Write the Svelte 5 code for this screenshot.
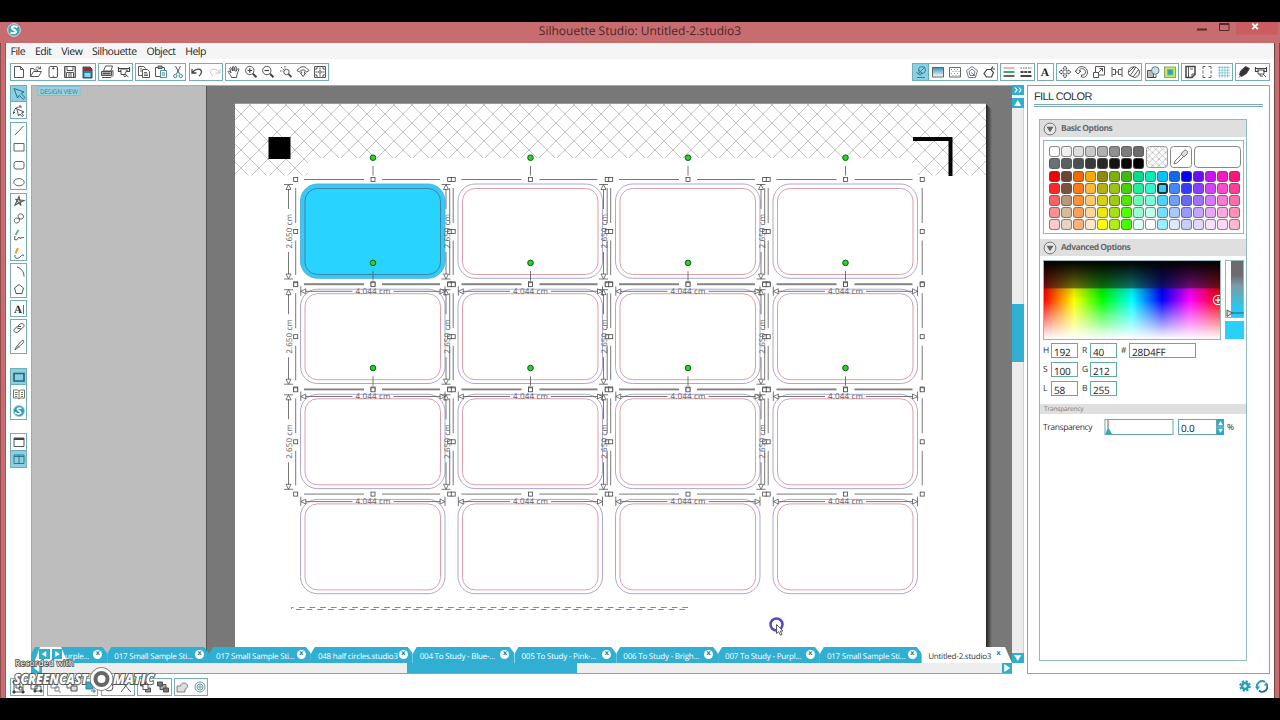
<script lang="ts">
  type Tool = string;
  type Group = { tools: Tool[]; gap?: number };

  // Inner markup of each 16x16 glyph
  const icons: Record<string, string> = {
    page: `<path d="M3.5 2.5h6l3 3v8h-9z M9.5 2.5v3h3" fill="#fff"/>`,
    open: `<path d="M2.5 12.5v-8h3l1 1.500h3v2 M2.500 12.500l3-5h8l-3 5z M8 4.500c1-2 3-2 4 0 M12.500 2.500v2.300h-2.300"/>`,
    card: `<rect x="4" y="2.500" width="8.500" height="11" rx="1.500"/><path d="M8.300 3v2.500 M7 4.500h2.600 M8.300 11.500v1.500" stroke-width=".8"/>`,
    save: `<path d="M2.500 2.500h11v11h-11z M5 2.500v4h6v-4 M4.500 13.500v-5h7v5 M6 10h4 M6 12h4"/><path d="M3.300 3v10 M12.800 3v10" stroke="#888"/>`,
    sd: `<path d="M4 3h7l2 2v9H4z" fill="#1888b0" stroke="#233a4c"/><path d="M5 4h7v3H5z" fill="#8c3044" stroke="none"/><path d="M5.500 9h6v4h-6z" fill="#8cd8ea" stroke="none"/>`,
    printer: `<path d="M4.500 7l2-5h7L12 7z" fill="#fff"/><path d="M2.500 7.500h10v4h-10z" fill="#aaa"/><path d="M3 13.500h9l2-2v-5l-1.500 1 M4 9.500h7"/>`,
    cutter: `<path d="M2.500 3v4.500h2.500V6h6v1.500h2.500V3 M2.500 4.500h11" stroke-width="1.200"/><path d="M5 6v4.500h3.500L11 6 M9.500 10.500l3 2.500" fill="#fff"/><circle cx="9" cy="11.500" r="1.200"/>`,
    copy: `<path d="M2.500 2.500h5l2 2v7h-7z"/><path d="M6.500 5.500h5l2 2v6h-7z" fill="#fff"/><path d="M8 8.500h3 M8 10h4 M8 11.500h4 M4 5h2 M4 7h2" stroke-width=".8"/>`,
    paste: `<path d="M2.500 3.500h9v9h-9z" /><path d="M5 2h4v2.500H5z" fill="#aaa"/><path d="M7.500 6.500h6v7h-6z" fill="#fff" stroke="#2c8798"/><path d="M9 9h3 M9 11h3" stroke-width=".8"/>`,
    cut: `<path d="M5.500 2l4 8 M10.500 2l-4 8"/><circle cx="5.300" cy="12" r="1.700" stroke="#287fa0"/><circle cx="10.700" cy="12" r="1.700" stroke="#287fa0"/>`,
    undo: `<path d="M3 5v4h4.500 M3.300 8.700C6 4.500 12 4 12.500 7.500c0 2-1 3.500-2.500 4.500" stroke-width="1.300"/>`,
    redo: `<path d="M13 5v4H8.500 M12.700 8.700C10 4.500 4 4 3.500 7.500c0 2 1 3.500 2.500 4.500" stroke="#b9bec0"/>`,
    hand: `<path d="M5.500 13.500C5 11 2.500 9 2 7.500c.500-1 1.500-.500 3 1.500L3.800 4.300c.500-1 1.200-.800 1.500 0L6.500 7V3c.500-1 1.300-.800 1.500 0v4l1-4c.600-.900 1.300-.600 1.400.200L9.900 7.500l1.800-2.800c.900-.400 1.300 0 1.200.800L11 10.500l-.500 3z" fill="#fff"/>`,
    zoomIn: `<circle cx="6.800" cy="6.500" r="4.200"/><path d="M4.500 6.500h4.600 M6.800 4.200v4.600" stroke-width="1.200"/><path d="M10 9.800l3.500 3.500" stroke-width="2"/>`,
    zoomOut: `<circle cx="6.800" cy="6.500" r="4.200"/><path d="M4.500 6.500h4.600" stroke-width="1.200"/><path d="M10 9.800l3.500 3.500" stroke-width="2"/>`,
    zoomSel: `<path d="M3 3l3 3 M7 2v3 M2 7h3" stroke-dasharray="1.500 1"/><circle cx="8.500" cy="8" r="2.700"/><path d="M10.500 10.200l3 3" stroke-width="1.800"/>`,
    zoomDrag: `<path d="M2 6.500l3-3c2-1 4-1 6 0l3 3-2.500 1.500-2-2h-3l-2 2z M5 8.500L8 12.500l3-4 M6.500 7.500v2 M9.500 7.500v2"/>`,
    fit: `<path d="M2.500 2.500h11v11h-11z"/><circle cx="8" cy="8" r="1.300"/><path d="M8 3.500v2.200 M8 10.300v2.200 M3.500 8h2.200 M10.300 8h2.200 M4 6V4h2 M10 4h2v2 M4 10v2h2 M12 10v2h-2"/>`,
    fillWin: `<circle cx="9" cy="6" r="3.500" stroke="#287d96"/><path d="M5 5l5 5 M3.500 8c1 2 3 3 5 3 M4 13.500h8 M12 3L5 10" stroke="#287d96"/>`,
    gradient: `<path d="M2.500 3.500h11v9.500h-11z" fill="url(#steel)" stroke="#555"/>`,
    patternFill: `<path d="M2.500 3.500h11v9.500h-11z" stroke="#555"/><path d="M4 5.500h8 M5.500 7.500h8 M4 9.500h8 M5.500 11.500h7" stroke="#4a8898" stroke-dasharray="1 2"/>`,
    lineStyle: `<path d="M8 2.500l5.500 4-2 7h-7l-2-7z M8 5l3 2.500-1 4H6l-1-4z" stroke="#5a7077"/><path d="M7 8.500l5 4" stroke="#5a7077"/>`,
    knife: `<path d="M6 5.500h4l2.500 3-2 4.500h-5l-2.500-3.500z M10 5.500l2-3 M11.500 5h2.500" stroke-width="1.200"/>`,
    redgreen: `<path d="M2.500 4h11" stroke="#e65c55"/><path d="M2.500 8h11" stroke="#40a878" stroke-width="2"/><path d="M2.500 12h11" stroke="#666" stroke-width="2"/>`,
    dashes: `<path d="M2.500 4h11" stroke-dasharray="1.500 1"/><path d="M2.500 8h11" stroke-width="2" stroke-dasharray="3 .8"/><path d="M2.500 12h11" stroke-width="2"/>`,
    letter: `<text x="8" y="12" text-anchor="middle" font-family="Liberation Serif, serif" font-weight="bold" font-size="11.500" fill="#222" stroke="none">A</text>`,
    move: `<path d="M8 2l2 2.500H9v2.500h2.500V6L14 8l-2.500 2V9H9v2.500h1L8 14l-2-2.500h1V9H4.500v1L2 8l2.500-2v1H7V4.500H6z" stroke="#555" fill="#fff"/>`,
    rotate: `<path d="M2.500 7C3 1 13 1 13.500 8c0 4-3 6-6 5v-2c3 0 4-1 4-3.500C11 4 6 3.500 5 7h2l-3 3-3-3z" fill="#fff"/>`,
    scale: `<path d="M2.500 8.500h5v5h-5z M4.500 8V2.500h9v8.500H8 M7 9l4.500-4.500 M8.500 4.500h3v3"/>`,
    align: `<path d="M3 3v10 M13 3v10 M3.500 5.500h3v5h-3 M12.500 5.500h-3v5h3 M6.500 8h3"/>`,
    replicate: `<path d="M3 11c-2-4 1-8 4-8 3-1 6 2 6.500 5 0 3-2 5-5 5.500z M4 12l6-9 M7 13l6-8 M3 8l5-5"/>`,
    weld: `<path d="M2.500 6.500h6v7h-6z" fill="#bbb"/><path d="M4 13.500h7v-3" /><circle cx="10.300" cy="6.500" r="3.800" fill="#c6e4ed" stroke="#49717e"/>`,
    offset: `<rect x="2.500" y="3" width="11" height="10.500" fill="#d2e84a" stroke="#7c9c7c"/><rect x="5.500" y="5.500" width="5.500" height="5.500" fill="#2ca5bb" stroke="#5ec8a6"/>`,
    pageSetup: `<path d="M4 2.500h9v8l-3 3H4z" stroke-width="1.500"/><path d="M6.500 2v12 M8 5h3 M10 13v-3h3"/>`,
    regMarks: `<path d="M4 5V2.500h2.500 M9.500 2.500H12V5 M12 11v2.500H9.500 M6.500 13.500H4V11 M4 6.500v3 M12 6.500v3" stroke="#555"/>`,
    grid: `<path d="M3.500 2v12 M6.200 2v12 M8.900 2v12 M11.600 2v12 M2 3.500h12 M2 6.200h12 M2 8.900h12 M2 11.600h12" stroke="#88c9d6" stroke-width=".9"/>`,
    blade: `<path d="M3.500 11l1-4 5-4.500 4 2-3 5-5 3z" fill="#333"/><path d="M3 13.500l2-2.500"/>`,
    send: `<path d="M2.500 3v4.500h2.500V6h6v1.500h2.500V3 M2.500 4.500h11" stroke-width="1.200"/><path d="M5 6.500v3.500h6V6.500 M10 10l3 3 M7 10v2h3"/>`,
    select: `<path d="M3 2.500l10 3.500-3 1.500 4 4-1.800 1.800-4-4L6.500 12z" stroke="#1c6880"/>`,
    editPts: `<path d="M2.500 11C3 6 5 4 9 4 M2 9.500h2 M4 5.500h2 M8 3h2v2 M6 6l7 3-2.500 1 2 2.500-1.500 1-2-2.500L7.500 13z"/>`,
    line: `<path d="M4 13l8.500-9"/>`,
    rect: `<path d="M3 4.500h10v7.500H3z" stroke="#555"/>`,
    rrect: `<rect x="3" y="4.500" width="10" height="7.500" rx="2" stroke="#555"/>`,
    ellipse: `<ellipse cx="8" cy="8.200" rx="5.200" ry="3.600" stroke="#555"/>`,
    polygon: `<path d="M8 3.500L4 12l9-4.500-8-1 5 6z" stroke="#555" stroke-width="1.100"/>`,
    curve: `<path d="M8 8C6 6 8 3 10.500 4c3 1 2.500 5-.5 5-2 .3-3.500-1-4.500-1-3 .3-3 4.500 0 5C8.500 13 9 10 8 8z"/>`,
    freehand: `<path d="M4.500 8L7.500 3" stroke="#39ad9b" stroke-width="1.500"/><path d="M4 9l-.500 3.500 2 .500L8 10l1 1.500 2-1 2 0"/>`,
    smooth: `<path d="M4.500 8.500L7 3" stroke="#eb9c22" stroke-width="2"/><path d="M4 10c-1 4 3 4 5 2s2-2.500 4-1.500"/>`,
    arc: `<path d="M6 3c4 1 7 4.500 7 9.500"/>`,
    pentagon: `<path d="M8 3.500l4.500 3.500-1.500 5.500H5L3.500 7z"/>`,
    text: `<text x="7" y="12" text-anchor="middle" font-family="Liberation Serif, serif" font-weight="bold" font-size="11" fill="#222" stroke="none">A</text><path d="M12.500 4v9" stroke-width=".8"/>`,
    eraser: `<path d="M3 9.500l6-5.500c2-1 5 0 4 2.500l-6 5.500c-2 1-5 0-4-2.500z M6 8l4 1 M7 6.500l3 0"/>`,
    knifeTool: `<path d="M4 13l1.500-3.500L11 3.500c1.500-.500 2 .500 1.500 2L7 10.500z M6.500 9l1.500 1.500"/>`,
    viewDesign: `<path d="M3 4.500h10v7.500H3z" stroke="#1f6679" stroke-width="1.600"/>`,
    viewLib: `<path d="M2.500 4h4L8 5l1.500-1h4v8h-4L8 13l-1.500-1h-4z M8 5v8 M4 6.500h2.500 M4 8.500h2.500 M10 6.500h2 M10 8.500h2 M4 10.500h2 M10 10.500h2" stroke="#665"/>`,
    store: `<circle cx="8" cy="8" r="5.500" fill="#2b9dba" stroke="#a6cdd6"/><path d="M10.500 5.500C7 4 5 6 7.500 7.500s4 2.500 0 3.500c-2 0-3-1-3-2" stroke="#fff" stroke-width="1.500"/>`,
    single: `<path d="M3 4h10v8.500H3z"/><path d="M3 5h10" stroke-width="2"/>`,
    split: `<path d="M3 4h10v8.500H3z M8 4v8.500 M3 5.500h10" stroke="#20718a"/>`,
    group: `<path d="M3 4v8 M12 4v8 M4 3h8 M4 13h8 M5 5h4v4H5z M8 8h3v3H8z"/><path d="M2 2h2v2H2z M11 2h2v2h-2z M2 12h2v2H2z M11 12h2v2h-2z" fill="#333"/>`,
    ungroup: `<path d="M3 4h6v6H3z M7 7h6v5H7z"/><path d="M2 3h2v2H2z M8 3h2v2H8z M12 11h2v2h-2z M6 11h2v2H6z" fill="#187c90"/>`,
    boxes: `<path d="M4 4h6v5H4z M8 8h4v4H8z M2 3h2 M12 13h2" stroke="#777"/>`,
    dup: `<path d="M3 4h6v5H3z" /><path d="M7 7h6v5H7z" fill="#ddd"/>`,
    addc: `<path d="M4 3h7v7H4z" fill="#3aaac0" stroke="#267e92"/><path d="M9 12h5 M12 10v4" stroke="#267e92"/>`,
    circleTool: `<circle cx="8" cy="8" r="4"/>`,
    crossTool: `<path d="M3 13l7-9 M5 4l8 9"/>`,
    front: `<path d="M2.500 3h5v4h-5z" fill="#777"/><path d="M7.500 9h5v4h-5z" fill="#999"/><path d="M5 5.500h5v5H5z" fill="#fff"/>`,
    back: `<path d="M5 5.500h6v5H5z" fill="#aaa"/><path d="M2.500 3h5v4h-5z M8.500 9h5v4h-5z" fill="#777"/>`,
    weldB: `<path d="M3 7h3.500c0-4 7-4 7 0 0 2-1.500 3-2.500 3v3H3z" fill="#ddd" stroke="#777"/>`,
    spiral: `<g stroke="#5b8a92"><circle cx="8" cy="8" r="5"/><circle cx="8" cy="8" r="3"/><circle cx="8" cy="8" r="1.200"/></g>`,
  };

  const topLeft: Group[] = [
    { tools: ["page", "open", "card", "save", "sd"] },
    { tools: ["printer", "cutter"] },
    { tools: ["copy", "paste", "cut"] },
    { tools: ["undo", "redo"] },
    { tools: ["hand", "zoomIn", "zoomOut", "zoomSel", "zoomDrag", "fit"] },
  ];
  const topRight: Group[] = [
    { tools: ["fillWin", "gradient", "patternFill", "lineStyle", "knife"] },
    { tools: ["redgreen", "dashes"] },
    { tools: ["letter"] },
    { tools: ["move", "rotate", "scale", "align", "replicate"] },
    { tools: ["weld", "offset"] },
    { tools: ["pageSetup", "regMarks", "grid"] },
    { tools: ["blade", "send"] },
  ];
  const side: Group[] = [
    { tools: ["select", "editPts"] },
    { tools: ["line", "rect", "rrect", "ellipse"] },
    { tools: ["polygon", "curve", "freehand", "smooth"] },
    { tools: ["arc", "pentagon"] },
    { tools: ["text"] },
    { tools: ["eraser", "knifeTool"] },
    { tools: ["viewDesign", "viewLib", "store"], gap: 12 },
    { tools: ["single", "split"], gap: 11.5 },
  ];
  const bottom: Group[] = [
    { tools: ["group", "ungroup"] },
    { tools: ["boxes", "dup", "addc"] },
    { tools: ["circleTool", "crossTool"] },
    { tools: ["front", "back"] },
    { tools: ["weldB", "spiral"] },
  ];
  const active = ["fillWin", "select", "viewDesign", "split"];

  const menus = ["File", "Edit", "View", "Silhouette", "Object", "Help"];
  const tabs = [
    "017 Small Sample Sti...",
    "017 Small Sample Sti...",
    "048 half circles.studio3",
    "004 To Study - Blue-...",
    "005 To Study - Pink-...",
    "006 To Study - Brigh...",
    "007 To Study - Purpl...",
    "017 Small Sample Sti...",
  ];

  const cols = [300.5, 458, 615.5, 773];
  const rows = [184, 289.2, 394.3, 499.4];

  const grays = [
    "#ffffff", "#f0f0f0", "#dedede", "#c8c8c8", "#b0b0b0", "#909090", "#7c7c7c", "#6c6c6c",
    "#6b7274", "#5c6060", "#4c5050", "#383a3a", "#282828", "#141414", "#080808", "#000000",
  ];
  const colors = [
    "#f00000 #6b4635 #f06a00 #ffa800 #8f8a0a #7fae10 #3fb814 #00e08a #00f0b8 #00c4ff #1068f0 #0800f0 #6a10f0 #cc10f8 #f818c0 #ff1878",
    "#ff2828 #7a5340 #ff7a18 #ffb838 #b8b010 #98c418 #48d008 #20f098 #30f8cc #30ccff #4088ff #3838ff #8840ff #d840ff #ff48d0 #ff4090",
    "#ff6060 #b89878 #ff9038 #ffc868 #d8d010 #a0cc10 #50e800 #68ffb8 #78ffdc #48d4ff #70a0ff #6868f8 #a070ff #dc78ff #ff78d8 #ff70a8",
    "#ff9090 #d4bc98 #ffa058 #ffd898 #f0e808 #a8e010 #50ff00 #98ffd0 #c0fff0 #78e0ff #a8c8ff #9898ff #c4a4ff #e8a8ff #ffa8e4 #ff90b8",
    "#ffc8cc #e4d4c0 #ffb078 #ffe8c8 #ffff00 #b0f010 #48ff00 #e0fff4 #ffffff #98f0ff #dce8ff #c8ccff #e0d8ff #f4e0ff #ffd8f4 #ffb8d0",
  ].flatMap((row) => row.split(" "));
  const picked = 25;

  const fields = [
    [{ label: "H", value: "192" }, { label: "R", value: "40" }, { label: "#", value: "28D4FF" }],
    [{ label: "S", value: "100" }, { label: "G", value: "212" }],
    [{ label: "L", value: "58" }, { label: "B", value: "255" }],
  ];
</script>

{#snippet groups(list: Group[])}
  {#each list as g}
    <div class="group" style:--lead="{g.gap ?? 0}px">
      {#each g.tools as name}
        <span class="tool" class:active={active.includes(name)}>
          <svg class="glyph" viewBox="0 0 16 16">{@html icons[name]}</svg>
        </span>
      {/each}
    </div>
  {/each}
{/snippet}

{#snippet section(title: string)}
  <div class="section">
    <svg viewBox="0 0 14 14" width="14" height="14">
      <circle cx="7" cy="7" r="5.900" fill="#e8e8e8" stroke="#777" />
      <path d="M3.500 4.800h7L7 10.300z" fill="#666" />
    </svg>
    <span>{title}</span>
  </div>
{/snippet}

{#snippet arrow(d: string)}
  <svg class="arrow" viewBox="0 0 10 10"><path {d} /></svg>
{/snippet}

<div class="screen">
  <header class="titlebar">
    <svg class="logo" viewBox="0 0 14 14">
      <circle cx="7" cy="7" r="6.300" fill="#3fa3b9" stroke="#d7e3e6" />
      <path d="M10.500 4.200C6 2 2.500 4.500 6.500 6.500s3.500 4.500-3 3.200" fill="none" stroke="#fff" stroke-width="2" />
    </svg>
    <span class="title">Silhouette Studio: Untitled-2.studio3</span>
    <svg class="winbtns" viewBox="1190 22 88 13">
      <path d="M1236 22h42v12.500h-42z" fill="#c95d60" />
      <path d="M1197 29.500h10" stroke="#54282c" stroke-width="2" />
      <path d="M1219.500 23.500h9.500v7h-9.500z M1219.500 24.500h9.500" fill="none" stroke="#54282c" />
      <path d="M1252.300 23.700l5.500 5.500 M1257.800 23.700l-5.500 5.500" stroke="#fff" stroke-width="1.800" />
    </svg>
  </header>

  <div class="window">
    <nav class="menu">
      {#each menus as m}<span>{m}</span>{/each}
    </nav>

    <div class="toolbar">
      {@render groups(topLeft)}
      <div class="spacer"></div>
      {@render groups(topRight)}
    </div>

    <main class="workspace">
      <div class="side">{@render groups(side)}</div>

      <div class="editor">
        <svg class="canvas" viewBox="31 85 981 578">
          <defs>
            <linearGradient id="steel" x2="0" y2="1">
              <stop offset="0" stop-color="#3a8fb5" />
              <stop offset="1" stop-color="#fff" />
            </linearGradient>
            <linearGradient id="shade">
              <stop offset="0" stop-color="#222" />
              <stop offset="1" stop-color="#777" />
            </linearGradient>
            <pattern id="hatch" x="241" y="96" width="18" height="18" patternUnits="userSpaceOnUse">
              <path d="M0 0l18 18 M18 0L0 18" stroke="#b4b4b4" stroke-width=".8" />
            </pattern>
          </defs>
          <path d="M31 85h176v578H31z" fill="#bdbdbd" />
          <path d="M207 85h805v578H207z" fill="#787878" />
          <path d="M206.500 85v578" stroke="#555" />
          <path d="M986 104l6 6v553h-6z" fill="url(#shade)" />
          <path d="M235 103h751v560H235z" fill="#fff" />
          <path d="M235 103.500h751" stroke="#999" />
          <path d="M235 104h751v71.500h-68l-9-17.500H308v17.500h-73z" fill="url(#hatch)" />
          <path d="M31.500 663V85.500H1012" fill="none" stroke="#7fb9bd" />
          <rect x="38" y="86.500" width="42" height="9" fill="#9fd2df" stroke="#82bfd0" />
          <text class="design" x="40" y="93.500" textLength="38">DESIGN VIEW</text>

          <path d="M268.500 137H290.500v22h-22z" />
          <path d="M913 139h37.500v37" fill="none" stroke="#000" stroke-width="4" />

          {#each rows as y, r}
            {#each cols as x, c}
              {@const filled = r === 0 && c === 0}
              <rect class="outer" class:filled {x} {y} width="144.500" height="94.300" rx="17" />
              <rect class="inner" class:filled x={x + 4.5} y={y + 4.5} width="135.500" height="86" rx="12.500" />
            {/each}
          {/each}

          {#each rows.slice(0, 3) as y}
            {#each cols as x}
              <g class="sel" transform="translate({x} {y})">
                <path d="M3.500-4.500h60 M81.500-4.500h58 M3.500 99.800h60 M81.500 99.800h58" />
                <path d="M-4.800 4v35 M-4.800 56.500v34.500 M149.200 4v35 M149.200 56.500v34.500 M72.500-18v9.500" />
                <path d="M-16.500.500h9 M-16.500 95h9 M-12 5v20 M-12 68v22 M-12 .500l2.500 5h-5z M-12 95l2.500-5h-5z" />
                <path d="M.300 102.300v9.500 M144.500 102.300v9.500 M5 107.300h47 M93 107.300h47 M.300 107.300l5-2.500v5z M144.500 107.300l-5-2.500v5z" />
                {#each [-4.8, 72.5, 149.2] as hx}
                  {#each [-4.5, 47.5, 99.8] as hy}
                    {#if hx !== 72.5 || hy !== 47.5}
                      <rect x={hx - 2} y={hy - 2} width="4" height="4" />
                    {/if}
                  {/each}
                {/each}
                <text x="55" y="110.200" textLength="35">4.044 cm</text>
                <text transform="translate(-8.500 64.500) rotate(-90)" textLength="34.500">2.650 cm</text>
                <circle cx="72.500" cy="-26.300" r="2.800" />
              </g>
            {/each}
          {/each}

          <path d="M299 607.500h389" class="dash" />
          <path d="M296 609.500h389" class="dash" />
          <path d="M291.500 609v-1.500h2" class="dash solid" />
          <circle cx="776.500" cy="624.500" r="6" fill="#fff" stroke="#5448c4" stroke-width="2.500" />
          <path d="M776.500 624.500v9l2.200-1.800 1.800 3.500 1.500-.8-1.700-3.400h2.700z" fill="#fff" stroke="#333" stroke-width=".8" />
        </svg>

        <div class="tabs">
          <div class="tab first">
            <span class="nav">
              {@render arrow("M7 2v6L2.500 5z")}
              {@render arrow("M3 2v6l4.500-3z")}
            </span>
            <span class="name">urple...</span>
            <i>x</i>
          </div>
          {#each tabs as t}
            <div class="tab"><span class="name">{t}</span><i>x</i></div>
          {/each}
          <div class="tab current"><span class="name">Untitled-2.studio3</span><i>x</i></div>
        </div>
        <div class="hscroll">
          {@render arrow("M8 1v8L2.500 5z")}
          <div class="thumb"></div>
          {@render arrow("M2 1v8l6-4z")}
        </div>
      </div>

      <div class="vscroll">
        {@render arrow("M1.500 2.500h1.500l2 2.500-2 2.500H1.500l2-2.500z M5.500 2.500H7l2 2.500-2 2.500H5.500l2-2.500z")}
        {@render arrow("M1.500 8h7L5 2z")}
        <div class="track"><div class="thumb"></div></div>
        {@render arrow("M1.500 2h7L5 8z")}
      </div>

      <aside class="panel">
        <h1>FILL COLOR</h1>
        <div class="body">
          {@render section("Basic Options")}
          <div class="palette">
            <div class="upper">
              <div class="swatches grays">
                {#each grays as c}<b style:background={c}></b>{/each}
              </div>
              <svg class="chip" viewBox="0 0 22 22">
                <defs>
                  <pattern id="none" width="6.500" height="6.500" patternUnits="userSpaceOnUse">
                    <path d="M0 0l6.500 6.500 M6.500 0L0 6.500" stroke="#aaa" stroke-width=".7" />
                  </pattern>
                </defs>
                <rect x=".5" y=".5" width="21" height="21" rx="3" fill="url(#none)" stroke="#999" />
              </svg>
              <svg class="chip" viewBox="0 0 22 22">
                <rect x=".5" y=".5" width="21" height="21" rx="3" fill="#fff" stroke="#888" />
                <path d="M4 18l1-3 6.500-6.500 2 2L7 17z" fill="#fff" stroke="#777" />
                <path d="M11 8l3-3.500c2-1.500 5 1.500 3 3.500L14 11z" fill="#ddd" stroke="#777" />
              </svg>
              <div class="preview"></div>
            </div>
            <div class="swatches">
              {#each colors as c, i}<b class:picked={i === picked} style:background={c}></b>{/each}
            </div>
          </div>

          {@render section("Advanced Options")}
          <div class="picker">
            <div class="spectrum">
              <svg viewBox="0 0 12 12"><circle cx="6" cy="6" r="4.700" /><path d="M6 3v6 M3 6h6" /></svg>
            </div>
            <div class="right">
              <div class="light"><svg viewBox="0 0 18 8"><path d="M1 1v6.500L6.500 4z" fill="#ddd" stroke="#555" /><path d="M6 4h12" stroke="#456" /></svg></div>
              <div class="sample"></div>
            </div>
          </div>

          <div class="fields">
            {#each fields as row}
              <div class="row">
                {#each row as f}
                  <label><span>{f.label}</span><em class:hex={f.label === "#"}>{f.value}</em></label>
                {/each}
              </div>
            {/each}
          </div>

          <div class="subhead">Transparency</div>
          <div class="transparency">
            <span class="caption">Transparency</span>
            <svg class="slider" viewBox="0 0 69 16"><rect x=".5" y=".5" width="68" height="15" /><path d="M3.500 1v8" stroke="#944" /><path d="M1 15l2.500-7 4 7z" fill="#32a9b6" /></svg>
            <em>0.0</em>
            <svg class="spin" viewBox="0 0 7 16"><path d="M0 0h7v16H0z" fill="#2aaac9" /><path d="M1.500 6h4l-2-3.500z M1.500 10h4l-2 3.500z M0 8h7" fill="#fff" stroke="#fff" stroke-width=".4" /></svg>
            <span class="pct">%</span>
          </div>
        </div>
      </aside>
    </main>

    <footer>
      {@render groups(bottom)}
      <div class="spacer"></div>
      <svg class="prefs" viewBox="0 0 30 14">
        <circle cx="7" cy="7" r="4.800" fill="none" stroke="#2a9bb9" stroke-width="2" stroke-dasharray="2.200 1.570" />
        <circle cx="7" cy="7" r="3" fill="none" stroke="#2a9bb9" stroke-width="2.500" />
        <path d="M19.500 9a5 5 0 0 1 7.500-6" fill="none" stroke="#2a9bb9" stroke-width="2" />
        <path d="M28.500 5a5 5 0 0 1-7.500 6.500" fill="none" stroke="#256c82" stroke-width="2" />
        <path d="M17 7.500h5l-2.500 4z M26 6.500h4.500L28 3z" fill="#2a9bb9" />
      </svg>
    </footer>
  </div>

  <svg class="watermark" viewBox="10 655 150 40">
    <text x="15" y="666" font-size="8.500" textLength="59">Recorded with</text>
    <text class="big" x="14" y="684" textLength="74" lengthAdjust="spacingAndGlyphs">SCREENCAST</text>
    <text class="big" x="113" y="684" textLength="41" lengthAdjust="spacingAndGlyphs">MATIC</text>
    <circle cx="101.500" cy="679" r="9" fill="none" stroke="#666" stroke-width="5.500" />
    <circle cx="101.500" cy="679" r="9.500" fill="none" stroke="#fff" stroke-width="3" />
    <circle cx="101.500" cy="679" r="5.500" fill="#fff" stroke="#666" stroke-width="3" />
  </svg>
</div>

<style>
  :global(body) {
    margin: 0;
    background: #000;
  }

  .screen {
    --teal: #72aeb3;
    --blue: #30afd3;
    position: relative;
    box-sizing: border-box;
    width: 1280px;
    height: 720px;
    padding: 22px 0;
    overflow: hidden;
    background: linear-gradient(90deg, #8e4a4d 0 1px, #c76d6f 1px 5px, #98575a 5px 6px, #c76d6f 6px 1274px, #713f43 1274px 1275px, #c76d6f 1275px 1279px, #7d4144 1279px) 0 22px / 1280px 676px no-repeat #000;
    font-family: "Open Sans", "Noto Sans", sans-serif;
    text-rendering: geometricPrecision;
    color: #333;
  }

  .screen * {
    box-sizing: border-box;
  }

  svg {
    display: block;
    flex: none;
  }

  .titlebar {
    display: grid;
    grid-template-columns: 1fr auto 1fr;
    height: 21px;
    padding: 0 2px 0 7px;
    background: #c76d6f;
  }

  .logo {
    width: 14px;
    height: 14px;
    margin-top: 1px;
  }

  .title {
    padding-right: 5px;
    font-size: 12px;
    line-height: 17px;
    color: #4e2428;
  }

  .winbtns {
    width: 88px;
    height: 13px;
    justify-self: end;
  }

  .window {
    display: flex;
    flex-direction: column;
    width: 1268px;
    height: 655px;
    margin-left: 6px;
    background: #fff;
  }

  .menu {
    display: flex;
    gap: 9.700px;
    height: 16px;
    padding-left: 4.500px;
    background: #f5f5f5;
    font-size: 10.500px;
    line-height: 18px;
    letter-spacing: -0.480px;
    color: #222;
  }

  .toolbar,
  footer {
    display: flex;
    align-items: flex-start;
    gap: 2.300px;
    padding: 0 4px;
  }

  .toolbar {
    height: 26px;
    padding-top: 4px;
    padding-right: 4.500px;
  }

  footer {
    padding-top: 4px;
  }

  .spacer {
    flex: 1;
    margin-right: -4.600px;
  }

  .group {
    display: flex;
    flex: none;
    outline: 1px solid var(--teal);
    outline-offset: -1px;
    background: #fff;
  }

  .tool {
    display: flex;
    align-items: center;
    justify-content: center;
    width: 17.200px;
    height: 17.500px;
  }

  .tool.active {
    background: #8bcfe2;
    outline: 1px solid #65aebd;
    outline-offset: -1px;
  }

  .glyph {
    width: 16px;
    height: 16px;
    fill: none;
    stroke: #444;
    stroke-width: 0.900;
  }

  .workspace {
    display: flex;
    height: 589px;
  }

  .side {
    display: flex;
    flex-direction: column;
    gap: 2.200px;
    width: 25px;
    padding-left: 4px;
  }

  .side .group {
    flex-direction: column;
    width: 17.200px;
    margin-top: var(--lead);
  }

  .side .tool {
    height: 17.200px;
  }

  .editor {
    width: 981px;
  }

  .canvas {
    width: 981px;
    height: 578px;
  }

  .design {
    font-size: 6.500px;
    fill: #377c92;
  }

  .outer {
    fill: #fff;
    stroke: #a19dd4;
    stroke-width: 0.900;
  }

  .inner {
    fill: none;
    stroke: #d8949c;
    stroke-width: 0.900;
  }

  .outer.filled {
    fill: #38c8f6;
    stroke: #4ab4d8;
  }

  .inner.filled {
    stroke: #3b7f9c;
    fill: #28d4ff;
  }

  .sel {
    fill: none;
    stroke: #555;
    stroke-width: 0.800;
  }

  .sel rect,
  .sel circle {
    fill: #fff;
    stroke: #444;
  }

  .sel circle {
    fill: #28d428;
    stroke: #145a14;
    stroke-width: 1;
  }

  .sel text {
    font: 8px "Noto Sans", sans-serif;
    fill: #666;
    stroke: none;
  }

  .dash {
    fill: none;
    stroke: #888;
    stroke-width: 1;
    stroke-dasharray: 5.650 5;
  }

  .solid {
    stroke-dasharray: none;
  }

  .tabs {
    position: relative;
    display: flex;
    height: 16px;
    margin-top: -16px;
  }

  .tab {
    display: flex;
    flex: none;
    align-items: center;
    width: 101.800px;
    padding: 2px 3px 0 7px;
    background: var(--blue);
    clip-path: polygon(0 7px, 1px 5px, 4px 0, calc(100% - 5px) 0, calc(100% - 1px) 5px, 100% 7px, 100% 100%, 0 100%);
    font-size: 8px;
    letter-spacing: -0.220px;
    color: #fff;
    white-space: nowrap;
  }

  .tab .name {
    flex: 1;
    min-width: 0;
  }

  .tab i {
    flex: none;
    width: 9px;
    height: 9px;
    margin: -4px 2px 0 0;
    border-radius: 50%;
    background: #fff;
    color: #287b90;
    font: bold 7px/8px "Open Sans", sans-serif;
    letter-spacing: 0;
    text-align: center;
  }

  .tab.first {
    width: 76.300px;
    padding-left: 3px;
  }

  .nav {
    display: flex;
    flex: none;
    gap: 2px;
    width: 34px;
    height: 16px;
    margin: -2px -3px 0 0;
    padding: 2px 0 0 5px;
    background: #fff;
    clip-path: polygon(0 100%, 6px 0, 27px 0, 34px 100%);
  }

  .tab.current {
    width: 90.300px;
    padding-left: 6.500px;
    background: #fff;
    color: #333;
    clip-path: polygon(0 100%, 6px 0, calc(100% - 7px) 0, 100% 100%);
  }

  .tab.current i {
    margin-right: 6px;
  }

  .arrow {
    width: 10.500px;
    height: 10px;
    background: #30afcc;
    fill: #fff;
  }

  .hscroll {
    display: flex;
    height: 11px;
    border-bottom: 1px solid #6ab0c0;
    background: #eee;
  }

  .hscroll .thumb {
    width: 170px;
    margin: 0 auto 0 365.500px;
    background: var(--blue);
  }

  .vscroll {
    display: flex;
    flex-direction: column;
    width: 11.500px;
    height: 578px;
  }

  .vscroll .arrow {
    width: 11.500px;
  }

  .vscroll .arrow:nth-child(2) {
    margin-top: 3px;
  }

  .track {
    flex: 1;
    padding-top: 196px;
    border-right: 1.500px solid #b7dbe1;
    background: #ececec;
  }

  .track .thumb {
    height: 58px;
    margin-right: -1.500px;
    background: var(--blue);
  }

  .panel {
    width: 243px;
    margin-left: 3.500px;
    padding: 4px 6px 0 7px;
    border: 1px solid var(--teal);
  }

  h1 {
    height: 17px;
    margin: 0 0 0 -1px;
    border-bottom: 3px double #7fa9b6;
    font: 11px/15px "Liberation Sans", sans-serif;
    letter-spacing: -0.600px;
    color: #333;
  }

  .body {
    width: 208px;
    height: 542px;
    margin: 12px 0 0 4px;
    border: 1px solid #8fb9bd;
  }

  .section {
    display: flex;
    align-items: center;
    gap: 4px;
    height: 17px;
    padding-left: 3px;
    background: #dfdfdf;
    font-size: 8.500px;
    font-weight: 700;
    letter-spacing: -0.500px;
    color: #6a6a6a;
  }

  .palette {
    width: 201px;
    height: 94px;
    margin: 3px 0 5px 3px;
    padding: 5px 0 0 5px;
    border: 1px solid #8fb9bd;
  }

  .upper {
    display: flex;
    gap: 2px;
    height: 25px;
  }

  .swatches {
    display: grid;
    grid-template-columns: repeat(16, 11px);
    grid-auto-rows: 11px;
    gap: 1px;
  }

  .swatches b {
    border: 1px solid #555a;
    border-radius: 3px;
  }

  .swatches b.picked {
    border: 2px solid #16343e;
  }

  .grays {
    grid-template-columns: repeat(8, 11px);
  }

  .chip {
    width: 22px;
    height: 22px;
  }

  .preview {
    width: 47px;
    height: 22px;
    border: 1px solid #888;
    border-radius: 4px;
  }

  .picker {
    display: flex;
    gap: 4px;
    padding: 3.500px 0 0 3px;
  }

  .spectrum {
    display: flex;
    align-items: center;
    justify-content: flex-end;
    width: 178px;
    height: 80px;
    overflow: hidden;
    border: 1px solid #8fb9bd;
    background:
      linear-gradient(#000, rgb(20 20 20 / 62%) 34%, rgb(0 0 0 / 14%) 36%, #0000 50%, #fff),
      linear-gradient(90deg, red, #ff0 17%, #0f0 33%, #0ff 50%, #00f 67%, #f0f 83%, red);
  }

  .spectrum svg {
    width: 12px;
    height: 12px;
    margin-right: -4px;
    fill: none;
    stroke: #fff;
    stroke-width: 1.300;
    filter: drop-shadow(0 0 0.500px #000);
  }

  .light {
    display: flex;
    align-items: flex-end;
    width: 19px;
    height: 58px;
    border: 1px solid #8fb9bd;
    background: linear-gradient(90deg, #fff 5px, #fff0 5px), linear-gradient(#6c6c70 25%, #7b9da8 45%, #28c8f4 85%);
  }

  .light svg {
    width: 18px;
    height: 8px;
  }

  .sample {
    width: 19px;
    height: 18px;
    margin-top: 3px;
    background: #28d0fa;
  }

  .fields {
    display: flex;
    flex-direction: column;
    gap: 4px;
    padding: 3.500px 0 8px 3px;
  }

  .row {
    display: flex;
    gap: 4px;
  }

  label {
    display: flex;
    font-size: 8.500px;
    line-height: 15px;
  }

  label span {
    width: 8px;
  }

  em {
    box-sizing: border-box;
    width: 27px;
    height: 15px;
    padding-left: 2px;
    border: 1px solid #62a8ae;
    font: 10px/17px "Open Sans", sans-serif;
    letter-spacing: -0.200px;
    color: #222;
  }

  em.hex {
    width: 67px;
  }

  .subhead {
    height: 10px;
    padding-left: 4px;
    background: #dfdfdf;
    font-size: 6.500px;
    line-height: 10px;
    letter-spacing: -0.150px;
    color: #777;
  }

  .transparency {
    display: flex;
    align-items: center;
    margin-top: 5px;
    padding-left: 3px;
    font-size: 8.500px;
    letter-spacing: -0.400px;
  }

  .caption {
    width: 61px;
  }

  .slider {
    width: 70px;
    height: 16px;
    margin-right: 4px;
  }

  .slider rect {
    fill: #fff;
    stroke: #62a8ae;
  }

  .transparency em {
    width: 39px;
    height: 16px;
  }

  .spin {
    width: 7px;
    height: 16px;
  }

  .pct {
    margin-left: 3px;
  }

  .prefs {
    width: 30px;
    height: 14px;
    margin: 1px 2px 0 0;
  }

  .watermark {
    position: absolute;
    top: 655px;
    left: 10px;
    width: 150px;
    height: 40px;
  }

  .watermark text {
    fill: #fff;
    stroke: #555;
    stroke-width: 1.600;
    paint-order: stroke;
  }

  .watermark .big {
    font: italic 800 14px "Open Sans", sans-serif;
    stroke-width: 2;
  }
</style>
